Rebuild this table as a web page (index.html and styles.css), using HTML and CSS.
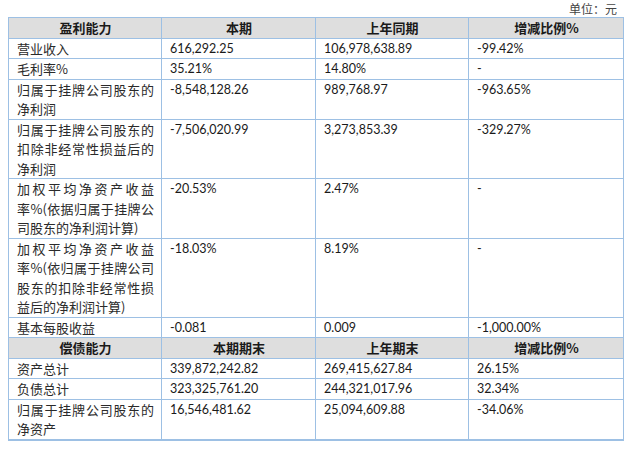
FILE: index.html
```html
<!DOCTYPE html>
<html lang="zh-CN">
<head>
<meta charset="utf-8">
<link rel="stylesheet" href="styles.css">
</head>
<body>
<div class="page">
  <div class="unit">单位：元</div>
  <table class="fin">
    <colgroup><col class="c1"><col class="c2"><col class="c3"><col class="c4"></colgroup>
    <tr class="head"><th>盈利能力</th><th>本期</th><th>上年同期</th><th>增减比例%</th></tr>
    <tr><td class="lbl">营业收入</td><td class="num">616,292.25</td><td class="num">106,978,638.89</td><td class="num">-99.42%</td></tr>
    <tr><td class="lbl">毛利率%</td><td class="num">35.21%</td><td class="num">14.80%</td><td class="num">-</td></tr>
    <tr><td class="lbl">归属于挂牌公司股东的净利润</td><td class="num">-8,548,128.26</td><td class="num">989,768.97</td><td class="num">-963.65%</td></tr>
    <tr><td class="lbl">归属于挂牌公司股东的扣除非经常性损益后的净利润</td><td class="num">-7,506,020.99</td><td class="num">3,273,853.39</td><td class="num">-329.27%</td></tr>
    <tr><td class="lbl">加权平均净资产收益率%(依据归属于挂牌公司股东的净利润计算)</td><td class="num">-20.53%</td><td class="num">2.47%</td><td class="num">-</td></tr>
    <tr><td class="lbl">加权平均净资产收益率%(依归属于挂牌公司股东的扣除非经常性损益后的净利润计算)</td><td class="num">-18.03%</td><td class="num">8.19%</td><td class="num">-</td></tr>
    <tr><td class="lbl">基本每股收益</td><td class="num">-0.081</td><td class="num">0.009</td><td class="num">-1,000.00%</td></tr>
    <tr class="head"><th>偿债能力</th><th>本期期末</th><th>上年期末</th><th>增减比例%</th></tr>
    <tr><td class="lbl">资产总计</td><td class="num">339,872,242.82</td><td class="num">269,415,627.84</td><td class="num">26.15%</td></tr>
    <tr><td class="lbl">负债总计</td><td class="num">323,325,761.20</td><td class="num">244,321,017.96</td><td class="num">32.34%</td></tr>
    <tr class="last"><td class="lbl">归属于挂牌公司股东的净资产</td><td class="num">16,546,481.62</td><td class="num">25,094,609.88</td><td class="num">-34.06%</td></tr>
  </table>
</div>
</body>
</html>
```

FILE: styles.css
```css
html, body {
  margin: 0;
  padding: 0;
  background: #ffffff;
}

.page {
  width: 615px;
  padding: 0 0 0 8px;
  font-family: "Noto Sans CJK SC", sans-serif;
  color: #1f1f1f;
}

.unit {
  height: 17px;
  line-height: 17px;
  font-size: 12px;
  color: #444;
  text-align: right;
  padding-right: 6px;
  overflow: visible;
}

.fin {
  width: 615px;
  border-collapse: collapse;
  table-layout: fixed;
  border-bottom: 2px solid #9dc0e4;
}

.c1 { width: 153px; }
.c2 { width: 154px; }
.c3 { width: 153px; }
.c4 { width: 155px; }

.fin th,
.fin td {
  border: 1px solid #9dc0e4;
  padding: 0 7px 0 8px;
  vertical-align: top;
  line-height: 19.5px;
}

.head th {
  background: #dedede;
  font-family: "Noto Sans CJK SC", sans-serif;
  font-weight: bold;
  font-size: 13px;
  text-align: center;
  color: #1a1a1a;
}

.lbl {
  font-size: 13px;
  text-align: justify;
  text-justify: inter-character;
  color: #2a2a2a;
}

.num {
  font-family: Lato, "Noto Sans CJK SC", sans-serif;
  font-size: 12.5px;
  color: #1a1a1a;
}
```
